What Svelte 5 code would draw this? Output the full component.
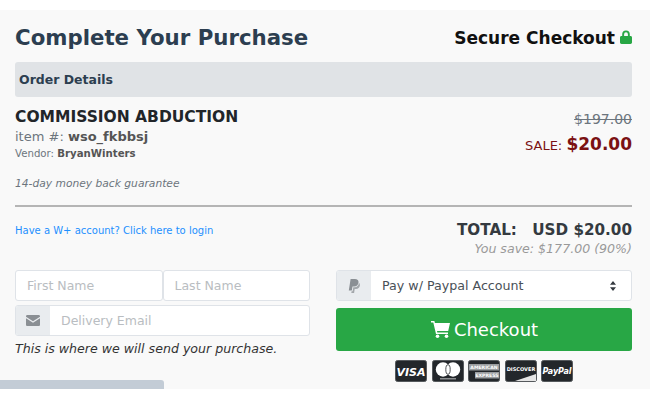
<script>
  const cards = ['visa', 'mastercard', 'amex', 'discover', 'paypal'];
</script>

<div class="page">
  <div class="panel">
    <header class="top">
      <h1>Complete Your Purchase</h1>
      <div class="secure">
        Secure Checkout
        <svg class="lock" viewBox="0 0 12 14" width="12" height="14">
          <path d="M2.200 6V4.200a3.800 3.800 0 0 1 7.600 0V6h.7c.8 0 1.500.6 1.500 1.400v5.200c0 .8-.7 1.400-1.500 1.400h-9C.7 14 0 13.400 0 12.600V7.400C0 6.600.7 6 1.500 6zm1.900 0h3.800V4.200a1.900 1.900 0 0 0-3.800 0z" fill="#28a745"/>
        </svg>
      </div>
    </header>

    <div class="bar">Order Details</div>

    <section class="order">
      <div class="item">
        <div class="name">COMMISSION ABDUCTION</div>
        <div class="sku">item #: <b>wso_fkbbsj</b></div>
        <div class="vendor">Vendor: <b>BryanWinters</b></div>
        <div class="guarantee">14-day money back guarantee</div>
      </div>
      <div class="prices">
        <div class="was">$197.00</div>
        <div class="sale">SALE: <b>$20.00</b></div>
      </div>
    </section>

    <hr />

    <section class="summary">
      <a class="login" href="#login">Have a W+ account? Click here to login</a>
      <div class="totals">
        <div class="total">TOTAL: <span class="amount">USD $20.00</span></div>
        <div class="save">You save: $177.00 (90%)</div>
      </div>
    </section>

    <section class="form">
      <div class="left">
        <div class="names">
          <div class="field">First Name</div>
          <div class="field">Last Name</div>
        </div>
        <div class="group">
          <span class="addon">
            <svg viewBox="0 0 14 11" width="14" height="11">
              <path d="M0 1.300C0 .6.600 0 1.300 0h11.400C13.400 0 14 .6 14 1.300v.5L7 6.300 0 1.800zM0 3.300l7 4.400 7-4.400v6.400c0 .7-.6 1.300-1.300 1.300H1.300C.6 11 0 10.400 0 9.700z" fill="#8a8f94"/>
            </svg>
          </span>
          <div class="input">Delivery Email</div>
        </div>
        <p class="hint">This is where we will send your purchase.</p>
      </div>

      <div class="right">
        <div class="group">
          <span class="addon">
            <svg viewBox="0 0 12 14" width="12" height="14">
              <path d="M2.600 0h4.300c2.500 0 3.900 1.300 3.600 3.500-.4 2.600-2 3.900-4.400 3.900H4.500L3.800 11.500H.8z" fill="#8a8f94"/>
              <path d="M10.900 3.800c.9.600 1.200 1.600 1 2.800-.4 2.200-1.800 3.400-3.900 3.400H6.700L6.100 14H3.300l.3-1.800h1l.7-4h1.200c2.500 0 4.100-1.400 4.400-4.400z" fill="#a3a7ab"/>
            </svg>
          </span>
          <div class="select">
            <span>Pay w/ Paypal Account</span>
            <svg viewBox="0 0 8 12" width="8" height="12">
              <path d="M4 1l3 3.800H1zM4 11L1 7.200h6z" fill="#343a40"/>
            </svg>
          </div>
        </div>
        <button class="checkout" type="button">
          <svg viewBox="0 0 19 17" width="19" height="17">
            <path d="M0 0h3.400l.5 2H19l-1.800 8H6l.3 1.500H17V13H5L2.300 1.600H0z" fill="#fff"/>
            <circle cx="6.500" cy="15.200" r="1.800" fill="#fff"/>
            <circle cx="15.500" cy="15.200" r="1.800" fill="#fff"/>
          </svg>
          Checkout
        </button>
        <div class="cards">
          {#each cards as card}
            <svg class="card" viewBox="0 0 32 22" width="32" height="22">
              <rect x=".5" y=".5" width="31" height="21" rx="2" fill="#23272b" stroke="#55595c"/>
              {#if card === 'visa'}
                <text x="16" y="15.500" text-anchor="middle" class="visa">VISA</text>
              {:else if card === 'mastercard'}
                <circle cx="11" cy="9.500" r="7.200" fill="#fff"/>
                <circle cx="21" cy="9.500" r="7.200" fill="#fff"/>
                <ellipse cx="16" cy="9.500" rx="2.200" ry="4.800" fill="#fff" stroke="#23272b" stroke-width=".8"/>
                <rect x="8" y="18" width="16" height="1.500" fill="#8b8d8f"/>
              {:else if card === 'amex'}
                <rect x="1" y="4" width="30" height="6.500" fill="#9a9da0"/>
                <rect x="7" y="12" width="24" height="6.500" fill="#9a9da0"/>
                <text x="16" y="9" text-anchor="middle" class="amex">AMERICAN</text>
                <text x="19" y="17" text-anchor="middle" class="amex">EXPRESS</text>
              {:else if card === 'discover'}
                <text x="16" y="10.500" text-anchor="middle" class="disc">DISCOVER</text>
                <path d="M10 21L31 14v7z" fill="#e6e6e6"/>
              {:else}
                <text x="16" y="13.800" text-anchor="middle" class="pp">PayPal</text>
              {/if}
            </svg>
          {/each}
        </div>
      </div>
    </section>

    <div class="next"></div>
  </div>
</div>

<style>
  :global(body) {
    margin: 0;
    background: #fff;
  }

  .page {
    height: 400px;
    padding-top: 10px;
    box-sizing: border-box;
    font-family: "DejaVu Sans", sans-serif;
    overflow: hidden;
  }

  .panel {
    position: relative;
    height: 379px;
    box-sizing: border-box;
    padding: 0 18px 0 15px;
    background: #f9f9f9;
    overflow: hidden;
  }

  .top {
    display: flex;
    justify-content: space-between;
    align-items: center;
    height: 52px;
    padding-top: 3px;
    box-sizing: border-box;
  }

  h1 {
    margin: 0;
    font-size: 21.300px;
    font-weight: 700;
    color: #2c3e50;
  }

  .secure {
    display: flex;
    align-items: center;
    gap: 5px;
    font-size: 17px;
    font-weight: 700;
    color: #111;
  }

  .lock {
    margin-bottom: 2px;
  }

  .bar {
    height: 35px;
    line-height: 35px;
    padding-left: 4px;
    border-radius: 3px;
    background: #e0e3e6;
    color: #2c3e50;
    font-size: 12.500px;
    font-weight: 700;
  }

  .order {
    display: flex;
    justify-content: space-between;
    height: 108px;
    box-sizing: border-box;
    padding-top: 10px;
  }

  .name {
    font-size: 15.500px;
    font-weight: 700;
    line-height: 20px;
    color: #212529;
  }

  .sku {
    font-size: 13px;
    line-height: 19px;
    color: #6c757d;
  }

  .sku b {
    color: #555;
  }

  .vendor {
    font-size: 10.200px;
    line-height: 15px;
    color: #6c757d;
  }

  .vendor b {
    color: #555;
  }

  .guarantee {
    margin-top: 16px;
    font-size: 10.700px;
    font-style: italic;
    color: #6c757d;
  }

  .prices {
    text-align: right;
  }

  .was {
    margin-top: 2px;
    font-size: 14px;
    line-height: 20px;
    color: #6c757d;
    text-decoration: line-through;
  }

  .sale {
    margin-top: 5px;
    font-size: 13px;
    color: #7b1113;
  }

  .sale b {
    font-size: 17px;
  }

  hr {
    margin: 0;
    border: 0;
    border-top: 2px solid #b5b5b5;
  }

  .summary {
    display: flex;
    justify-content: space-between;
    align-items: flex-start;
    height: 50px;
    padding-top: 13px;
  }

  .login {
    margin-top: 5px;
    font-size: 10px;
    color: #1e90ff;
    text-decoration: none;
  }

  .totals {
    text-align: right;
  }

  .total {
    font-size: 15.200px;
    font-weight: 700;
    line-height: 20px;
    color: #343a40;
  }

  .amount {
    margin-left: 10px;
  }

  .save {
    font-size: 12.600px;
    font-style: italic;
    line-height: 18px;
    color: #999;
  }

  .form {
    display: flex;
    justify-content: space-between;
  }

  .left {
    width: 295px;
  }

  .right {
    width: 296px;
  }

  .names {
    display: flex;
    margin-bottom: 4px;
  }

  .field {
    flex: 1;
    box-sizing: border-box;
    height: 31px;
    line-height: 29px;
    padding-left: 11px;
    background: #fff;
    border: 1px solid #dfe3e8;
    border-radius: 3px;
    color: #b9bdc1;
    font-size: 12.500px;
  }

  .group {
    display: flex;
    box-sizing: border-box;
    height: 31px;
    background: #fff;
    border: 1px solid #dfe3e8;
    border-radius: 3px;
    overflow: hidden;
  }

  .addon {
    display: flex;
    align-items: center;
    justify-content: center;
    flex: none;
    width: 34px;
    background: #e9ecef;
  }

  .input {
    padding-left: 11px;
    line-height: 29px;
    color: #b9bdc1;
    font-size: 12.500px;
  }

  .hint {
    margin: 4px 0 0;
    font-size: 12.600px;
    font-style: italic;
    line-height: 18px;
    color: #333;
  }

  .select {
    flex: 1;
    display: flex;
    justify-content: space-between;
    align-items: center;
    padding: 0 14px 0 11px;
    font-size: 12.650px;
    color: #495057;
  }

  .checkout {
    display: flex;
    align-items: center;
    justify-content: center;
    gap: 4px;
    width: 100%;
    height: 43px;
    margin-top: 7px;
    padding: 0 0 0 1px;
    border: 0;
    border-radius: 3px;
    background: #28a745;
    color: #fff;
    font-family: inherit;
    font-size: 18px;
  }

  .cards {
    display: flex;
    justify-content: center;
    gap: 4.500px;
    margin-top: 9px;
  }

  .card text {
    fill: #fff;
    font-family: "DejaVu Sans", sans-serif;
    font-weight: 700;
  }

  .visa {
    font-size: 11px;
    font-style: italic;
  }

  .amex {
    font-size: 4.600px;
    font-weight: 400;
  }

  .disc {
    font-size: 5px;
  }

  .pp {
    font-size: 8px;
    font-style: italic;
  }

  .next {
    position: absolute;
    left: 0;
    bottom: 0;
    width: 164px;
    height: 9px;
    border-radius: 0 3px 0 0;
    background: #c3ccd6;
  }
</style>
